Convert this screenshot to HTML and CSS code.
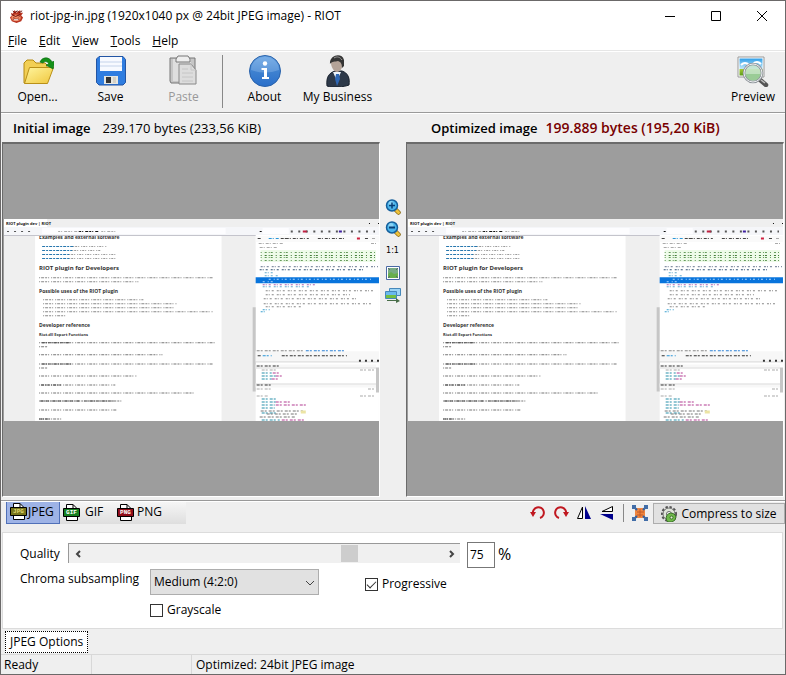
FILE: index.html
```html
<!DOCTYPE html>
<html lang="en">
<head>
<meta charset="utf-8">
<title>riot-jpg-in.jpg - RIOT</title>
<link rel="stylesheet" href="styles.css">
</head>
<body>
<svg class="defs" aria-hidden="true">
  <defs>
    <linearGradient id="gFolder" x1="0" y1="0" x2="1" y2="1"><stop offset="0" stop-color="#fff6a0"/><stop offset="1" stop-color="#f0c63c"/></linearGradient>
    <linearGradient id="gBlue" x1="0" y1="0" x2="0" y2="1"><stop offset="0" stop-color="#6aa6e4"/><stop offset=".5" stop-color="#3f82d0"/><stop offset="1" stop-color="#2a6fca"/></linearGradient>
    <linearGradient id="gSky" x1="0" y1="0" x2="0" y2="1"><stop offset="0" stop-color="#2f9fe8"/><stop offset=".6" stop-color="#bfe6f8"/><stop offset=".62" stop-color="#a4cc30"/><stop offset="1" stop-color="#5c9a1c"/></linearGradient>
    <symbol id="doc-file" viewBox="0 0 17 17">
      <path d="M3.5 16.500V.5H10l4.500 4.500v11.500z" fill="#fff" stroke="#000"/>
      <path d="M10 .5V5h4.500" fill="none" stroke="#000"/>
      <path d="M.5 4.500h16v8H.5z" fill="currentColor" stroke="#000"/>
    </symbol>
    <symbol id="lens" viewBox="0 0 16 16">
      <path d="M10.500 10.500l3 3" stroke="#8a6a10" stroke-width="4.500" stroke-linecap="round"/>
      <path d="M10.500 10.500l3 3" stroke="#efc23c" stroke-width="3" stroke-linecap="round"/>
      <circle cx="7" cy="6.500" r="5.500" fill="#4ab4ea" stroke="#145f9c" stroke-width="1.500"/>
      <circle cx="6" cy="4.500" r="2.500" fill="#a4e0fa" opacity=".7"/>
    </symbol>
    <symbol id="shot" viewBox="0 0 374 202">
      <rect width="374" height="202" fill="#fff"/>
      <text x="35" y="20" class="h3">Examples and external software</text>
      <path d="M0 0h374v8H0z" fill="#efefef"/><path d="M0 0h43v8H0z" fill="#fff"/>
      <path d="M0 8h374v8H0z" fill="#f5f6f9"/><path d="M38 9h183v6H38zM258 9h26v6h-26z" fill="#fdfdff"/>
      <path d="M0 16.500h251" stroke="#c4c4cc"/>
      <path d="M0 17h31v185H0zM217 17h34v185h-34z" fill="#efefef"/>
      <path d="M248 88h3v84h-3zM371 148h3v25h-3z" fill="#c6c6c6"/>
      <text x="2" y="6" class="tiny">RIOT plugin dev | RIOT</text>
      <g fill="none" stroke="#555" stroke-dasharray="2 1 1 2 3 1">
        <path d="M3 12.500h26" stroke-dasharray="2 5"/><path d="M54 12.500h22M97 12.500h14" stroke="#aaa"/><path d="M75 12.500h20" stroke="#111"/>
        <path d="M364 4.500h1M373 4.500h1M255 12.500h2" stroke="#111"/>
      </g>
      <g fill="none" stroke="#999" stroke-dasharray="1 1 2 1 1 2">
        <path d="M69 27.500h33M68 31.500h28M65 35.500h46M65 39.500h46"/>
        <path d="M38 27.500h32M38 31.500h30M38 35.500h27M38 39.500h27" stroke="#2777ae" stroke-dasharray="3 1 2 1"/>
      </g>
      <text x="35" y="51" class="h2">RIOT plugin for Developers</text>
      <text x="35" y="74" class="h3">Possible uses of the RIOT plugin</text>
      <text x="35" y="108" class="h3">Developer reference</text>
      <text x="35" y="117" class="h4">Riot.dll Export Functions</text>
      <g fill="none" stroke="#888" stroke-dasharray="1 1 3 1 2 1 1 2">
        <path d="M35 58.500h173M35 62.500h99M39 80.500h100M39 84.500h133M39 88.500h132M39 92.500h169M39 96.500h23"/>
        <path d="M35 123.500h175M35 127.500h8M35 135.500h123M35 144.500h173M35 148.500h9M35 156.500h97M35 165.500h76M35 173.500h154M35 181.500h84M35 190.500h78M35 199.500h23" stroke="#777"/>
        <path d="M38 123.500h28M38 144.500h30M37 165.500h20M36 181.500h40M80 181.500h30M35 199.500h12" stroke="#444" stroke-dasharray="3 1 1 1"/>
      </g>
      <g fill="none" stroke="#555" stroke-width="2" stroke-dasharray="2 5.500">
        <path d="M286 12.500h84"/><path d="M298 12.500h4" stroke="#c02040" stroke-dasharray="none"/><path d="M334 12.500h3" stroke="#4020a0" stroke-dasharray="none"/>
      </g>
      <path d="M251 17h123v6H251z" fill="#fafafa"/>
      <g fill="none" stroke="#444" stroke-dasharray="3 1 1 2">
        <path d="M253 19.500h4M276 19.500h6M281 19.500h23M313 19.500h26M360 19.500h4"/><path d="M264 19.500h10" stroke="#2895d8"/><path d="M352 19.500h3" stroke="#d02040" stroke-width="2" stroke-dasharray="none"/>
        <path d="M367 19.500h3M254 24.500h24M366 24.500h5M255 28.500h18" stroke="#aaa"/>
      </g>
      <path d="M256 31h115v12H256z" fill="#eefbe9"/>
      <g fill="none" stroke="#659a5b" stroke-dasharray="1 3 2 2 1 1 2 3">
        <path d="M256 33.500h115M256 38.500h115M256 41.500h115"/><path d="M256 36.500h115" stroke="#437b38"/>
      </g>
      <g fill="none" stroke="#8590a4" stroke-dasharray="2 1 1 2 2 3">
        <path d="M256 47.500h117"/><path d="M255 50.500h105" stroke="#315171"/><path d="M260 53.500h10M260 56.500h14M258 67.500h46" stroke="#66aaca"/><path d="M258 65.500h52" stroke="#ad62b0"/>
        <path d="M261 71.500h108M261 75.500h84M259 79.500h94M259 84.500h110M261 87.500h36" stroke="#888"/><path d="M258 90.500h7M256 92.500h6" stroke="#3aa0d0"/>
      </g>
      <path d="M251 58h123v6H251z" fill="#0874dc"/><path d="M264 60h102M258 62.500h12" stroke="#b4daff" stroke-dasharray="2 3 1 2" fill="none"/>
      <path d="M251 132h123v10H251zM251 145h120v4H251zM251 164h120v4H251z" fill="#f7f7f7"/>
      <path d="M251 148.500h120M251 164.500h120M251 142.500h123" stroke="#ddd"/>
      <g fill="none" stroke="#333" stroke-dasharray="3 1 2 2">
        <path d="M252 131.500h47" stroke="#888"/><path d="M301 131.500h40" stroke="#2c80d4"/>
        <path d="M253 136.500h3M277 136.500h65"/><path d="M258 136.500h9" stroke="#2895d8"/>
        <path d="M354 141.500h20" stroke-dasharray="2 4" stroke-width="2"/><path d="M252 146.500h22M252 165.500h14"/>
        <path d="M257 150.500h15M355 150.500h16M252 169.500h16M363 169.500h7M355 176.500h15M252 176.500h12" stroke="#aaa"/>
        <path d="M257 153.500h10M257 156.500h14M257 159.500h10M257 179.500h16M257 182.500h14M257 185.500h13M257 188.500h13M257 193.500h15M257 200.500h18" stroke="#268fa9"/>
        <path d="M268 153.500h7M271 156.500h8M267 159.500h7M271 182.500h15M271 185.500h31M277 200.500h23" stroke="#b23b91"/>
        <path d="M262 194.500h31M256 191.500h42M255 197.500h35" stroke="#777"/>
      </g>
      <path d="M296 191h5v3h-5z" fill="#ece4a4"/>
    </symbol>
  </defs>
</svg>
<main class="window">
  <header class="titlebar">
    <svg class="app" viewBox="0 0 16 16" aria-hidden="true"><path d="M2 5l2 1 2-4 2 3 4-3v3l3 0-2 3 2 2-2 4-5 2-5-2-2-4 2-2z" fill="#b83420"/><path d="M4 3l2 2 3-2 2 2 3-2" fill="none" stroke="#61100d"/><ellipse cx="7.500" cy="10.500" rx="5" ry="3.500" fill="#f08a64"/><path d="M3 7l4 2 5-2M4 12h7M5 10l1 1M10 10l1-1" fill="none" stroke="#5f0808"/><path d="M5 12.500h5" stroke="#fff"/></svg>
    <h1>riot-jpg-in.jpg (1920x1040 px @ 24bit JPEG image) - RIOT</h1>
    <div class="controls">
      <button aria-label="Minimize"><svg viewBox="0 0 12 12"><path d="M1 6.500h10"/></svg></button>
      <button aria-label="Maximize"><svg viewBox="0 0 12 12"><path d="M1.500 1.500h9v9h-9z"/></svg></button>
      <button aria-label="Close"><svg viewBox="0 0 12 12"><path d="M1 1l10 10M11 1L1 11"/></svg></button>
    </div>
  </header>
  <nav class="menu"><button><u>F</u>ile</button><button><u>E</u>dit</button><button><u>V</u>iew</button><button><u>T</u>ools</button><button><u>H</u>elp</button></nav>
  <div class="toolbar">
    <button><svg viewBox="0 0 32 32"><path d="M2 28V8l3-3h6l3 3h9l2 2v18z" fill="#f2cf55" stroke="#b48a12"/><path d="M2.500 28.500l5-16h24l-6 16z" fill="url(#gFolder)" stroke="#b99018"/><path d="M18 7c2-5 9-6 12 0l3-1-2 8-7-4 3-1c-2-3-4-3-6-1z" fill="#159018" stroke="#0b6e12" stroke-width=".7"/></svg>Open...</button>
    <button><svg viewBox="0 0 32 32"><path d="M4 1.500h24l2.500 3v23L28 30H4l-2.500-2.500V4z" fill="#2f7de0" stroke="#2355a4"/><path d="M5 2h22v14H5z" fill="#f7faff"/><path d="M5 7h22M5 11h22" stroke="#c4d3ea"/><path d="M9 21h14v8H9z" fill="#e6e6e0"/><path d="M11 22h5v6h-5z" fill="#333"/><path d="M18 22h3v6h-3z" fill="#d4d0c4"/></svg>Save</button>
    <button disabled><svg viewBox="0 0 32 32"><path d="M2 3h25v25H3l-1-2z" fill="#c6c6c6" stroke="#777"/><path d="M5 4h18v22H5z" fill="#dedede"/><path d="M8 4l2-3h10l2 3v3H8z" fill="#eee" stroke="#777"/><path d="M11 9h12l5 6v14H11z" fill="#ddd" stroke="#888"/><path d="M23 9v6h5M14 14h6M14 18h11M14 22h11M14 26h11" fill="none" stroke="#c6c6c6"/></svg>Paste</button>
    <span class="rule"></span>
    <button><svg viewBox="0 0 32 32"><circle cx="16" cy="16" r="15.500" fill="url(#gBlue)" stroke="#2a62aa"/><path d="M2 15a14 13 0 0 1 28 0q-14 5-28 0z" fill="#9dc4ee" opacity=".35"/><circle cx="16" cy="8.500" r="2.200" fill="#fff"/><path d="M12.500 13H18v9h2v2h-7v-2h2v-7h-2.500z" fill="#fff"/></svg>About</button>
    <button><svg viewBox="0 0 32 32"><path d="M5 31c-1-9 2-13 8-15h7c6 2 8 7 7 14-5 2-16 3-22 1z" fill="#2d3949" stroke="#19222e"/><path d="M11 17l4 9 4-9z" fill="#eef4fc"/><path d="M14 19h3l1 5-3 7-2-7z" fill="#2e67b4"/><path d="M9 8c0-6 10-7 12-1 0 6-3 10-6 10s-6-5-6-9z" fill="#b4a398"/><path d="M8 9c-1-9 12-12 14-4v6l-2 2c0-4-1-6-4-7-3 1-6 0-8 3z" fill="#353535"/><path d="M12 3c3-2 6-1 8 2" fill="none" stroke="#999"/></svg>My Business</button>
    <button class="preview"><svg viewBox="0 0 32 32"><path d="M1 2h26v20H1z" fill="#fff" stroke="#999"/><path d="M2.500 3.500h23v17h-23z" fill="url(#gSky)"/><path d="M4 10q4-4 8 0M16 9q4-4 8 0" stroke="#fff" stroke-width="2" fill="none"/><path d="M22 24l7 6" stroke="#555" stroke-width="4.500" stroke-linecap="round"/><path d="M24 25l4 3" stroke="#bbb" stroke-width="1.500"/><circle cx="16" cy="18" r="9" fill="#c8e5cf" opacity=".9"/><path d="M9 19h14v4q-7 5-14 0z" fill="#9acc96"/><circle cx="16" cy="18" r="9" fill="none" stroke="#8c9298" stroke-width="2.500"/><circle cx="16" cy="18" r="9" fill="none" stroke="#eef0f2"/></svg>Preview</button>
  </div>
  <div class="compare">
    <section class="side">
      <h2><b>Initial image</b><span>239.170 bytes (233,56 KiB)</span></h2>
      <div class="pane"><svg class="shot" viewBox="0 0 374 202" role="img" aria-label="Initial image"><use href="#shot"/></svg></div>
    </section>
    <div class="zoombar">
      <button aria-label="Zoom in"><svg viewBox="0 0 16 16"><use href="#lens"/><path d="M4 6.500h6M7 3.500v6" stroke="#073f78" stroke-width="1.500"/></svg></button>
      <button aria-label="Zoom out"><svg viewBox="0 0 16 16"><use href="#lens"/><path d="M4 6.500h6" stroke="#073f78" stroke-width="2"/></svg></button>
      <button class="ratio">1:1</button>
      <button aria-label="Fit image"><svg viewBox="0 0 16 16"><path d="M1.500 1.500h13v13h-13z" fill="#fff" stroke="#4a69a5"/><path d="M3 3h10v10H3z" fill="#78ac83"/><path d="M3 9l3-2 3 2 4-1v5H3z" fill="#68af4c"/><path d="M3 3l2 2M13 3l-2 2M3 13l2-2M13 13l-2-2" stroke="#567"/></svg></button>
      <button aria-label="Sync views"><svg viewBox="0 0 16 16"><path d="M4.500 1.500h11v7h-11z" fill="#9bd4f5" stroke="#4688ba"/><path d="M.5 4.500h11v7H.5z" fill="#69b9ed" stroke="#4688ba"/><path d="M1 8h10v3H1z" fill="#73bf40"/><path d="M2 13h9v-2l4 3-4 2v-2H2z" fill="#486d48"/></svg></button>
    </div>
    <section class="side">
      <h2 class="optimized"><b>Optimized image</b><span>199.889 bytes (195,20 KiB)</span></h2>
      <div class="pane"><svg class="shot" viewBox="0 0 374 202" role="img" aria-label="Optimized image"><use href="#shot"/></svg></div>
    </section>
  </div>
  <div class="formatbar">
    <div class="formats">
      <button class="active jpg"><span class="file"><svg viewBox="0 0 17 17"><use href="#doc-file"/></svg><i>JPG</i></span>JPEG</button>
      <button class="gif"><span class="file"><svg viewBox="0 0 17 17"><use href="#doc-file"/></svg><i>GIF</i></span>GIF</button>
      <button class="png"><span class="file"><svg viewBox="0 0 17 17"><use href="#doc-file"/></svg><i>PNG</i></span>PNG</button>
    </div>
    <div class="edit">
      <button aria-label="Rotate left"><svg viewBox="0 0 16 16"><path d="M3 9a5.500 5.500 0 1 1 7 4" fill="none" stroke="#c01820" stroke-width="2"/><path d="M0 7h6l-3 5z" fill="#c01820"/></svg></button>
      <button aria-label="Rotate right"><svg viewBox="0 0 16 16"><path d="M13 9a5.500 5.500 0 1 0-7 4" fill="none" stroke="#c01820" stroke-width="2"/><path d="M10 7h6l-3 5z" fill="#c01820"/></svg></button>
      <button aria-label="Flip horizontal"><svg viewBox="0 0 16 16"><path d="M6.500 2v11.500h-5z" fill="#fff" stroke="#000"/><path d="M9 1v13h6z" fill="#00008c"/></svg></button>
      <button aria-label="Flip vertical"><svg viewBox="0 0 16 16"><path d="M13.500 1.500v5H3z" fill="#fff" stroke="#000"/><path d="M1 9h13v6z" fill="#00008c"/></svg></button>
      <span class="rule"></span>
      <button aria-label="Resize image"><svg viewBox="0 0 16 16"><path d="M3 3h10v10H3z" fill="#ef853f"/><path d="M5 7h7M5 10h6M8 4v8" stroke="#c05a28"/><path d="M1 1l4 4M15 1l-4 4M1 15l4-4M15 15l-4-4" stroke="#315f9f" stroke-width="2"/><path d="M0 0h4v4H0zM12 0h4v4h-4zM0 12h4v4H0zM12 12h4v4h-4z" fill="#416da8"/></svg></button>
    </div>
    <button class="compress"><svg viewBox="0 0 16 16"><circle cx="8" cy="8" r="6" fill="#e6ebdf" stroke="#535353" stroke-width="4" stroke-dasharray="2 1.500"/><circle cx="8" cy="8" r="6" fill="#dfe4da" stroke="#777"/><circle cx="8" cy="8" r="2.500" fill="#fff" stroke="#666"/><path d="M7 16a5 5 0 1 1 8-5l-1 3-3 2z" fill="#6fb94a" stroke="#376d26"/><circle cx="10.500" cy="11.500" r="1.500" fill="#e6efd8" stroke="#376d26"/></svg>Compress to size</button>
  </div>
  <form class="options">
    <div class="row">
      <label class="name" for="quality">Quality</label>
      <div class="scroll">
        <button type="button" aria-label="Decrease"><svg viewBox="0 0 8 8"><path d="M6 1L3 4l3 3"/></svg></button>
        <input type="range" id="quality" min="0" max="100" value="75">
        <button type="button" aria-label="Increase"><svg viewBox="0 0 8 8"><path d="M2 1l3 3-3 3"/></svg></button>
      </div>
      <input class="number" type="text" value="75" aria-label="Quality percent"><span class="percent">%</span>
    </div>
    <div class="row">
      <label class="name chroma" for="chroma">Chroma subsampling</label>
      <div class="drop"><select id="chroma"><option>Medium (4:2:0)</option></select><svg viewBox="0 0 10 6"><path d="M1 1l4 4 4-4"/></svg></div>
      <label class="check progressive"><input type="checkbox" checked>Progressive</label>
    </div>
    <label class="check gray"><input type="checkbox">Grayscale</label>
  </form>
  <div class="pagetabs"><button>JPEG Options</button></div>
  <footer class="status"><span>Ready</span><span></span><span>Optimized: 24bit JPEG image</span></footer>
</main>
</body>
</html>
```
FILE: styles.css
```css
* { box-sizing: border-box; }
body {
  margin: 0;
  font: 12px/16px "Open Sans", "Noto Sans", sans-serif;
  color: #000;
}
button {
  margin: 0;
  padding: 0;
  border: 0;
  background: none;
  font: inherit;
  color: inherit;
}
input, select { font: inherit; color: inherit; margin: 0; }
svg { display: block; flex: none; }
.defs { position: absolute; width: 0; height: 0; }

.window {
  display: flex;
  flex-direction: column;
  min-height: 100vh;
  border: 1px solid #6b6969;
  background: #efefef;
}

/* Title and menu */
.titlebar {
  display: flex;
  align-items: center;
  height: 29px;
  padding-left: 8px;
  background: #fff;
}
.app { width: 15px; height: 15px; }
.titlebar h1 { margin: 0 0 0 6px; font-size: 12px; font-weight: 400; white-space: nowrap; }
.controls { display: flex; margin-left: auto; }
.controls button { display: grid; place-items: center; width: 46px; height: 28px; }
.controls svg { width: 12px; height: 12px; fill: none; stroke: #000; }
.menu { display: flex; gap: 12px; height: 21px; padding: 3px 7px 1px; background: #fff; border-bottom: 1px solid #e6e6e6; }

/* Main toolbar */
.toolbar {
  display: flex;
  height: 62px;
  padding-top: 3px;
  border-top: 1px solid #fff;
  border-bottom: 1px solid #9a9a9a;
}
.toolbar button { display: flex; flex-direction: column; align-items: center; gap: 2px; width: 73px; }
.toolbar svg { width: 32px; height: 32px; }
.toolbar button:disabled { color: #999; }
.toolbar .rule { margin: 0 5px 4px 2px; }
.toolbar .preview { width: 64px; margin-left: auto; }
.rule { border-left: 1px solid #888; }

/* Image comparison */
.compare {
  display: flex;
  flex: 1;
  padding: 0 1px 3px;
  border-top: 1px solid #fff;
  border-bottom: 1px solid #999;
}
.side { display: flex; flex: 1; flex-direction: column; min-width: 0; }
.side h2 { display: flex; gap: 12px; height: 28px; margin: 0; padding: 6px 11px; font-size: 13px; font-weight: 400; white-space: nowrap; }
.side h2 b { font-weight: 600; }
.side h2.optimized { gap: 8px; padding-left: 25px; }
.optimized span { color: #780000; font-size: 14px; font-weight: 600; }
.pane {
  display: grid;
  align-items: center;
  flex: 1;
  padding-left: 1px;
  border: 1px solid #fff;
  border-top: 2px solid #6b6b6b;
  border-left: 1px solid #6b6b6b;
  background: #9d9d9d;
}
.shot { width: 100%; }
#shot text { font-family: "Open Sans", sans-serif; font-weight: 700; fill: #333; }
#shot .tiny { font-size: 4px; fill: #111; }
#shot .h2 { font-size: 6px; }
#shot .h3 { font-size: 5px; }
#shot .h4 { font-size: 4px; }
.zoombar { display: flex; flex-direction: column; align-items: center; gap: 6px; width: 26px; padding: 85px 1px 0 0; }
.zoombar svg { width: 16px; height: 16px; }
.ratio { font: 8px/16px "DejaVu Sans", sans-serif; }

/* Format bar */
.formatbar { display: flex; height: 31px; border-top: 1px solid #fff; }
.formats { display: flex; width: 180px; height: 22px; margin-left: 5px; background: linear-gradient(#f6f6f6, #dedede); }
.formats button { display: flex; align-items: center; gap: 1px; width: 54px; padding: 0 0 2px 3px; }
.formats .gif { gap: 5px; }
.formats .png { gap: 3px; }
.formats .active { border: 1px solid #5070b8; border-top: 0; background: #9eb3e6; }
.file { position: relative; width: 17px; height: 17px; }
.file i {
  position: absolute;
  inset: 5px 0 4px 0;
  font: 700 6px/8px "Liberation Mono", monospace;
  text-align: center;
  color: #fff;
}
.jpg .file { color: #77751c; }
.jpg .file i { color: #e0d870; }
.gif .file { color: #168020; }
.png .file { color: #900c18; }
.edit { display: flex; gap: 7px; height: 22px; margin-left: auto; align-items: center; }
.edit svg { width: 16px; height: 16px; }
.edit .rule { height: 18px; margin: 0 1px; }
.compress {
  display: flex;
  align-items: center;
  justify-content: center;
  gap: 4px;
  width: 132px;
  height: 21px;
  margin: 1px 0 0 5px;
  border: 1px solid #adadad;
  background: #e1e1e1;
}
.compress svg { width: 16px; height: 16px; }

/* Quality options */
.options {
  height: 97px;
  margin: 0 2px 0 1px;
  padding: 9px 17px;
  border: 1px solid #dcdcdc;
  background: #fff;
}
.row { display: flex; height: 27px; }
.name { width: 48px; line-height: 24px; }
.name.chroma { width: 130px; line-height: 20px; white-space: nowrap; }
.scroll {
  display: flex;
  width: 392px;
  height: 20px;
  margin-top: 1px;
  border: 1px solid #999;
  border-width: 1px 0 0 1px;
  background: #f0f0f0;
}
.scroll button { display: grid; place-items: center; width: 17px; }
.scroll svg { width: 8px; height: 8px; fill: none; stroke: #444; stroke-width: 2; }
.scroll input { appearance: none; flex: 1; min-width: 0; height: 17px; margin-top: 1px; background: none; }
.scroll input::-webkit-slider-thumb { appearance: none; width: 17px; height: 17px; background: #cdcdcd; }
.number { width: 28px; height: 26px; margin-left: 7px; padding: 0 2px 2px; border: 1px solid #777; background: #fff; }
.percent { margin-left: 3px; font-size: 16px; line-height: 24px; }
.drop { position: relative; width: 169px; }
.drop select {
  appearance: none;
  display: block;
  width: 100%;
  height: 26px;
  padding: 0 3px;
  border: 1px solid #adadad;
  border-radius: 0;
  background: #e1e1e1;
}
.drop svg { position: absolute; right: 4px; top: 11px; width: 10px; height: 6px; fill: none; stroke: #444; }
.check { display: flex; align-items: center; gap: 4px; height: 16px; }
.check input { appearance: none; display: grid; place-items: center; width: 13px; height: 13px; border: 1px solid #333; background: #fff; }
.check input:checked::after { content: ""; width: 8px; height: 4px; margin-bottom: 2px; border: solid #333; border-width: 0 0 1px 1px; rotate: -45deg; }
.progressive { margin: 7px 0 0 46px; }
.gray { margin: 6px 0 0 130px; }

/* Page tabs and status bar */
.pagetabs { height: 26px; padding: 2px 4px; border-bottom: 1px solid #d8d8d8; }
.pagetabs button { height: 22px; padding: 0 4px; border: 1px dotted #000; background: #fff; }
.status { display: flex; height: 19px; line-height: 19px; }
.status span { width: 100px; padding-left: 4px; border-left: 1px solid #d8d8d8; white-space: nowrap; }
.status span:first-child { width: 90px; padding-left: 3px; border: 0; }
.status span:last-child { width: auto; flex: 1; }
```
